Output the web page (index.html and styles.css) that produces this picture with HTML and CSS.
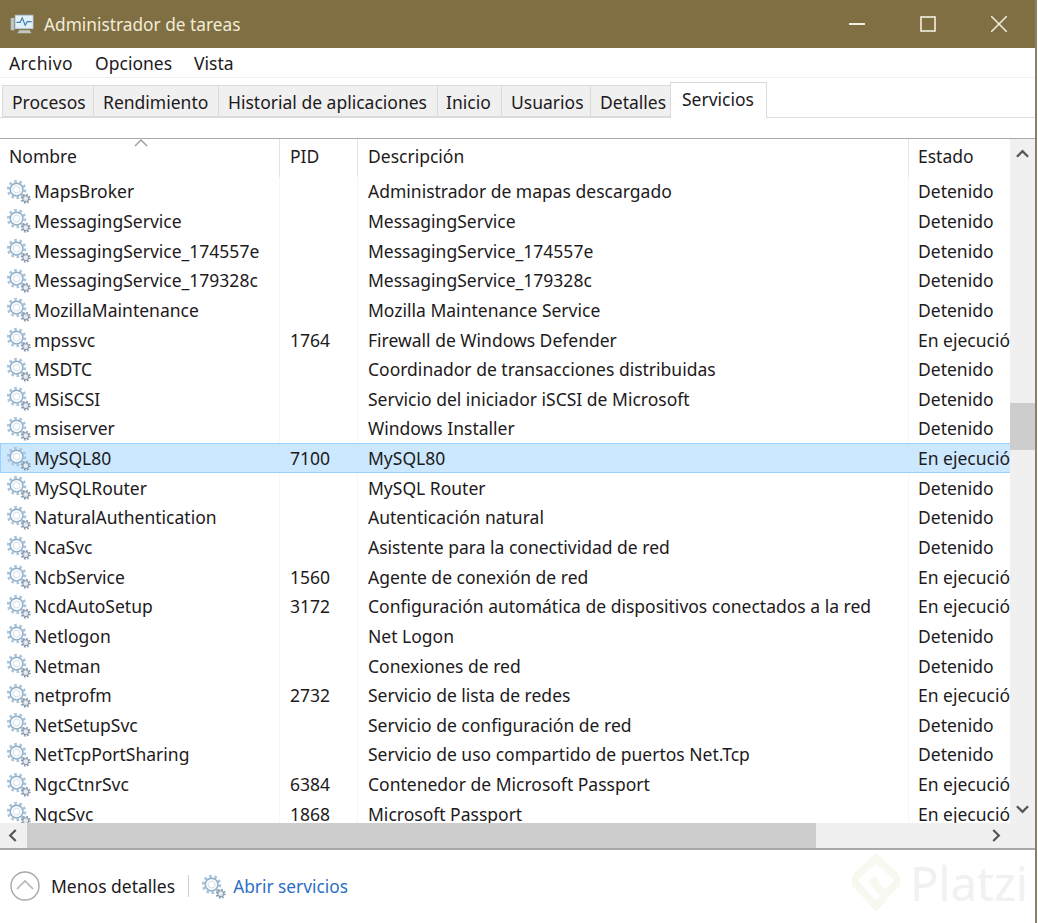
FILE: index.html
```html
<!DOCTYPE html>
<html lang="es">
<head>
  <meta charset="UTF-8" />
  <title>Administrador de tareas</title>
  <link rel="stylesheet" href="styles.css">
</head>
<body>

<svg class="defs" width="0" height="0">
  <symbol id="gear" viewBox="0 0 26 26">
    <circle cx="11" cy="11" r="8.6" fill="none" stroke="#a9c4dc" stroke-width="3" stroke-dasharray="2.7 2.7"/>
    <circle cx="11" cy="11" r="6.6" fill="#f7fafc" stroke="#8fadc6" stroke-width="1.5"/>
    <circle cx="11" cy="11" r="3.4" fill="#fff" stroke="#d5e0e9" stroke-width="1"/>
    <circle cx="20.5" cy="20.5" r="4.2" fill="none" stroke="#8496a8" stroke-width="2" stroke-dasharray="1.65 1.65"/>
    <circle cx="20.5" cy="20.5" r="3" fill="#e6ebf0" stroke="#8a9cae" stroke-width="1.1"/>
  </symbol>
</svg>

<div class="window">

  <!-- Title bar -->
  <div class="titlebar">
    <svg class="app-icon" viewBox="0 0 36 28" width="26" height="21">
      <rect x="1" y="5" width="5" height="17" fill="#b9c4c6"/>
      <rect x="7" y="1" width="25" height="19" fill="#e4f0f8" stroke="#9fb6c6"/>
      <path d="M9 11h5l3-6 4 10 3-5h6" fill="none" stroke="#3f7fb5" stroke-width="1.6"/>
      <path d="M13 22h14l3 4H10z" fill="#c3c8c0"/>
    </svg>
    <span class="title">Administrador de tareas</span>
    <div class="controls">
      <svg viewBox="0 0 16 16" width="16" height="16"><path d="M0 8h16" stroke="#f4efdf" stroke-width="2"/></svg>
      <svg viewBox="0 0 16 16" width="16" height="16"><rect x="1" y="1" width="14" height="14" fill="none" stroke="#f4efdf" stroke-width="1.6"/></svg>
      <svg viewBox="0 0 16 16" width="16" height="16"><path d="M0 0l16 16M16 0L0 16" stroke="#f4efdf" stroke-width="1.5"/></svg>
    </div>
  </div>

  <!-- Menu -->
  <div class="menu">
    <span class="menu-first">Archivo</span>
    <span>Opciones</span>
    <span>Vista</span>
  </div>

  <!-- Tabs -->
  <div class="tabs">
    <div class="tab tab-procesos">Procesos</div>
    <div class="tab tab-rendimiento">Rendimiento</div>
    <div class="tab tab-historial">Historial de aplicaciones</div>
    <div class="tab tab-inicio">Inicio</div>
    <div class="tab tab-usuarios">Usuarios</div>
    <div class="tab tab-detalles">Detalles</div>
    <div class="tab tab-active">Servicios</div>
  </div>

  <!-- Services table -->
  <div class="table-area">
    <div class="table-main">
      <div class="table">
        <div class="row header-row">
          <div class="cell">Nombre<svg class="sort" viewBox="0 0 14 8" width="14" height="8"><path d="M1 7l6-6 6 6" fill="none" stroke="#9a9a9a" stroke-width="1.4"/></svg></div>
          <div class="cell">PID</div>
          <div class="cell">Descripción</div>
          <div class="cell">Estado</div>
        </div>
        <div class="rows">
          <div class="row"><div class="cell"><svg class="gear"><use href="#gear"/></svg>MapsBroker</div><div class="cell"></div><div class="cell">Administrador de mapas descargado</div><div class="cell">Detenido</div></div>
          <div class="row"><div class="cell"><svg class="gear"><use href="#gear"/></svg>MessagingService</div><div class="cell"></div><div class="cell">MessagingService</div><div class="cell">Detenido</div></div>
          <div class="row"><div class="cell"><svg class="gear"><use href="#gear"/></svg>MessagingService_174557e</div><div class="cell"></div><div class="cell">MessagingService_174557e</div><div class="cell">Detenido</div></div>
          <div class="row"><div class="cell"><svg class="gear"><use href="#gear"/></svg>MessagingService_179328c</div><div class="cell"></div><div class="cell">MessagingService_179328c</div><div class="cell">Detenido</div></div>
          <div class="row"><div class="cell"><svg class="gear"><use href="#gear"/></svg>MozillaMaintenance</div><div class="cell"></div><div class="cell">Mozilla Maintenance Service</div><div class="cell">Detenido</div></div>
          <div class="row"><div class="cell"><svg class="gear"><use href="#gear"/></svg>mpssvc</div><div class="cell">1764</div><div class="cell">Firewall de Windows Defender</div><div class="cell">En ejecución</div></div>
          <div class="row"><div class="cell"><svg class="gear"><use href="#gear"/></svg>MSDTC</div><div class="cell"></div><div class="cell">Coordinador de transacciones distribuidas</div><div class="cell">Detenido</div></div>
          <div class="row"><div class="cell"><svg class="gear"><use href="#gear"/></svg>MSiSCSI</div><div class="cell"></div><div class="cell">Servicio del iniciador iSCSI de Microsoft</div><div class="cell">Detenido</div></div>
          <div class="row"><div class="cell"><svg class="gear"><use href="#gear"/></svg>msiserver</div><div class="cell"></div><div class="cell">Windows Installer</div><div class="cell">Detenido</div></div>
          <div class="row selected"><div class="cell"><svg class="gear"><use href="#gear"/></svg>MySQL80</div><div class="cell">7100</div><div class="cell">MySQL80</div><div class="cell">En ejecución</div></div>
          <div class="row"><div class="cell"><svg class="gear"><use href="#gear"/></svg>MySQLRouter</div><div class="cell"></div><div class="cell">MySQL Router</div><div class="cell">Detenido</div></div>
          <div class="row"><div class="cell"><svg class="gear"><use href="#gear"/></svg>NaturalAuthentication</div><div class="cell"></div><div class="cell">Autenticación natural</div><div class="cell">Detenido</div></div>
          <div class="row"><div class="cell"><svg class="gear"><use href="#gear"/></svg>NcaSvc</div><div class="cell"></div><div class="cell">Asistente para la conectividad de red</div><div class="cell">Detenido</div></div>
          <div class="row"><div class="cell"><svg class="gear"><use href="#gear"/></svg>NcbService</div><div class="cell">1560</div><div class="cell">Agente de conexión de red</div><div class="cell">En ejecución</div></div>
          <div class="row"><div class="cell"><svg class="gear"><use href="#gear"/></svg>NcdAutoSetup</div><div class="cell">3172</div><div class="cell">Configuración automática de dispositivos conectados a la red</div><div class="cell">En ejecución</div></div>
          <div class="row"><div class="cell"><svg class="gear"><use href="#gear"/></svg>Netlogon</div><div class="cell"></div><div class="cell">Net Logon</div><div class="cell">Detenido</div></div>
          <div class="row"><div class="cell"><svg class="gear"><use href="#gear"/></svg>Netman</div><div class="cell"></div><div class="cell">Conexiones de red</div><div class="cell">Detenido</div></div>
          <div class="row"><div class="cell"><svg class="gear"><use href="#gear"/></svg>netprofm</div><div class="cell">2732</div><div class="cell">Servicio de lista de redes</div><div class="cell">En ejecución</div></div>
          <div class="row"><div class="cell"><svg class="gear"><use href="#gear"/></svg>NetSetupSvc</div><div class="cell"></div><div class="cell">Servicio de configuración de red</div><div class="cell">Detenido</div></div>
          <div class="row"><div class="cell"><svg class="gear"><use href="#gear"/></svg>NetTcpPortSharing</div><div class="cell"></div><div class="cell">Servicio de uso compartido de puertos Net.Tcp</div><div class="cell">Detenido</div></div>
          <div class="row"><div class="cell"><svg class="gear"><use href="#gear"/></svg>NgcCtnrSvc</div><div class="cell">6384</div><div class="cell">Contenedor de Microsoft Passport</div><div class="cell">En ejecución</div></div>
          <div class="row"><div class="cell"><svg class="gear"><use href="#gear"/></svg>NgcSvc</div><div class="cell">1868</div><div class="cell">Microsoft Passport</div><div class="cell">En ejecución</div></div>
        </div>
      </div>
      <div class="vscroll">
        <svg viewBox="0 0 14 9" width="13" height="9"><path d="M1 8l6-6 6 6" fill="none" stroke="#555" stroke-width="2.4"/></svg>
        <div class="vtrack"><div class="vthumb"></div></div>
        <svg viewBox="0 0 14 9" width="13" height="9"><path d="M1 1l6 6 6-6" fill="none" stroke="#555" stroke-width="2.4"/></svg>
      </div>
    </div>
    <div class="hscroll">
      <svg viewBox="0 0 9 14" width="9" height="13"><path d="M8 1L2 7l6 6" fill="none" stroke="#555" stroke-width="2.4"/></svg>
      <div class="hthumb"></div>
      <svg viewBox="0 0 9 14" width="9" height="13"><path d="M1 1l6 6-6 6" fill="none" stroke="#555" stroke-width="2.4"/></svg>
    </div>
  </div>

  <!-- Footer -->
  <div class="footer">
    <svg class="less-icon" viewBox="0 0 30 30" width="30" height="30">
      <circle cx="15" cy="15" r="14" fill="#fff" stroke="#a8a8a8" stroke-width="1.4"/>
      <path d="M7 18l8-8 8 8" fill="none" stroke="#b5b5b5" stroke-width="1.6"/>
    </svg>
    <span class="less-text">Menos detalles</span>
    <span class="divider"></span>
    <svg class="gear footer-gear"><use href="#gear"/></svg>
    <span class="link">Abrir servicios</span>
  </div>

  <div class="watermark">
    <svg viewBox="0 0 50 60" width="48" height="58"><path d="M32 47l-7 7L5 32a6 6 0 0 1 0-9L25 4l20 19a6 6 0 0 1 0 9L34 43 22 29l4-4" fill="none" stroke="#f7f8ef" stroke-width="8"/></svg>
    <span>Platzi</span>
  </div>
</div>

</body>
</html>
```

FILE: styles.css
```css
* { box-sizing: border-box; }

html, body {
  margin: 0;
  padding: 0;
  height: 100%;
  background-color: white;
  font-family: "Noto Sans", "Open Sans", sans-serif;
  font-size: 17.5px;
  color: #1d1a20;
}

.defs { position: absolute; }

.window {
  position: relative;
  width: 1037px;
  height: 923px;
  border-right: 2px solid #8a8062;
  overflow: hidden;
  display: flex;
  flex-direction: column;
}

.titlebar {
  height: 48px;
  flex: none;
  background-color: #7f6f42;
  color: #f2ecd9;
  display: flex;
  align-items: center;
  padding-left: 10px;
}

.app-icon { margin-right: 8px; }

.title { font-size: 17.3px; }

.controls {
  margin-left: auto;
  display: flex;
  gap: 55px;
  padding-right: 28px;
}

.menu {
  height: 30px;
  flex: none;
  display: flex;
  align-items: center;
  gap: 22px;
  padding-left: 9px;
  border-bottom: 1px solid #f0f0f0;
}

.menu-first { letter-spacing: 0.4px; }

.tabs {
  height: 40px;
  flex: none;
  display: flex;
  align-items: flex-end;
  padding-left: 2px;
  border-bottom: 1px solid #dcdcdc;
}

.tab {
  height: 32px;
  padding-left: 9px;
  padding-top: 1px;
  background-color: #f0f0f0;
  border: 1px solid #dadada;
  border-right-width: 0;
  display: flex;
  align-items: center;
  white-space: nowrap;
}

.tab-procesos { width: 91px; }
.tab-rendimiento { width: 125px; }
.tab-historial { width: 219px; }
.tab-inicio { width: 64px; padding-left: 8px; }
.tab-usuarios { width: 89px; }
.tab-detalles { width: 80px; }

.tab-active {
  width: 97px;
  height: 36px;
  margin-bottom: -1px;
  padding-left: 11px;
  padding-top: 0;
  padding-bottom: 3px;
  background-color: white;
  border: 1px solid #dadada;
  border-bottom: none;
}

.table-area {
  flex: none;
  margin-top: 20px;
  border-top: 1px solid #a9a9a9;
  border-bottom: 2px solid #a9a9a9;
}

.table-main {
  height: 684px;
  display: flex;
}

.table {
  width: 1010px;
  overflow: hidden;
}

.row {
  display: grid;
  grid-template-columns: 280px 78px 551px 200px;
  height: 29.65px;
  width: 1109px;
  align-items: stretch;
}

.header-row { height: 37.5px; }

.cell {
  display: flex;
  align-items: center;
  padding-left: 10px;
  white-space: nowrap;
  border-right: 1px solid #f7f7f7;
}

.cell:last-child { padding-left: 9px; }

.header-row .cell {
  position: relative;
  padding-bottom: 3px;
  border-right: 1px solid #e3e3e3;
}

.header-row .cell:first-child { padding-left: 9px; }

.sort {
  position: absolute;
  top: 0;
  left: 134px;
}

.rows .cell:first-child { padding-left: 6px; }

.gear {
  width: 25px;
  height: 25px;
  margin-right: 3px;
  flex: none;
}

.selected {
  background-color: #cce8ff;
  outline: 1px solid #99d1ff;
  outline-offset: -1px;
}

.selected .cell { border-right-color: #cce8ff; }

.vscroll {
  width: 25px;
  flex: none;
  background-color: #f0f0f0;
  display: flex;
  flex-direction: column;
  align-items: center;
  padding: 10px 0 9px;
}

.vtrack {
  flex: 1;
  width: 100%;
  padding-top: 245px;
}

.vthumb {
  height: 47px;
  background-color: #cdcdcd;
}

.hscroll {
  height: 25px;
  background-color: #f0f0f0;
  display: flex;
  align-items: center;
  padding: 0 34px 0 8px;
}

.hthumb {
  width: 789px;
  height: 100%;
  margin-left: 10px;
  margin-right: auto;
  background-color: #cdcdcd;
}

.footer {
  flex: 1;
  display: flex;
  align-items: center;
  padding-left: 10px;
  padding-bottom: 1px;
}

.less-text { margin-left: 11px; }

.divider {
  width: 1px;
  height: 22px;
  margin: 0 12px 0 13px;
  background-color: #cfcfcf;
}

.footer-gear { margin-right: 7px; }

.link {
  color: #2a6fc4;
  font-size: 17.3px;
}

.watermark {
  position: absolute;
  right: 7px;
  bottom: 8px;
  display: flex;
  align-items: center;
  gap: 10px;
  color: #f1f1f0;
  font-size: 47px;
}
```
